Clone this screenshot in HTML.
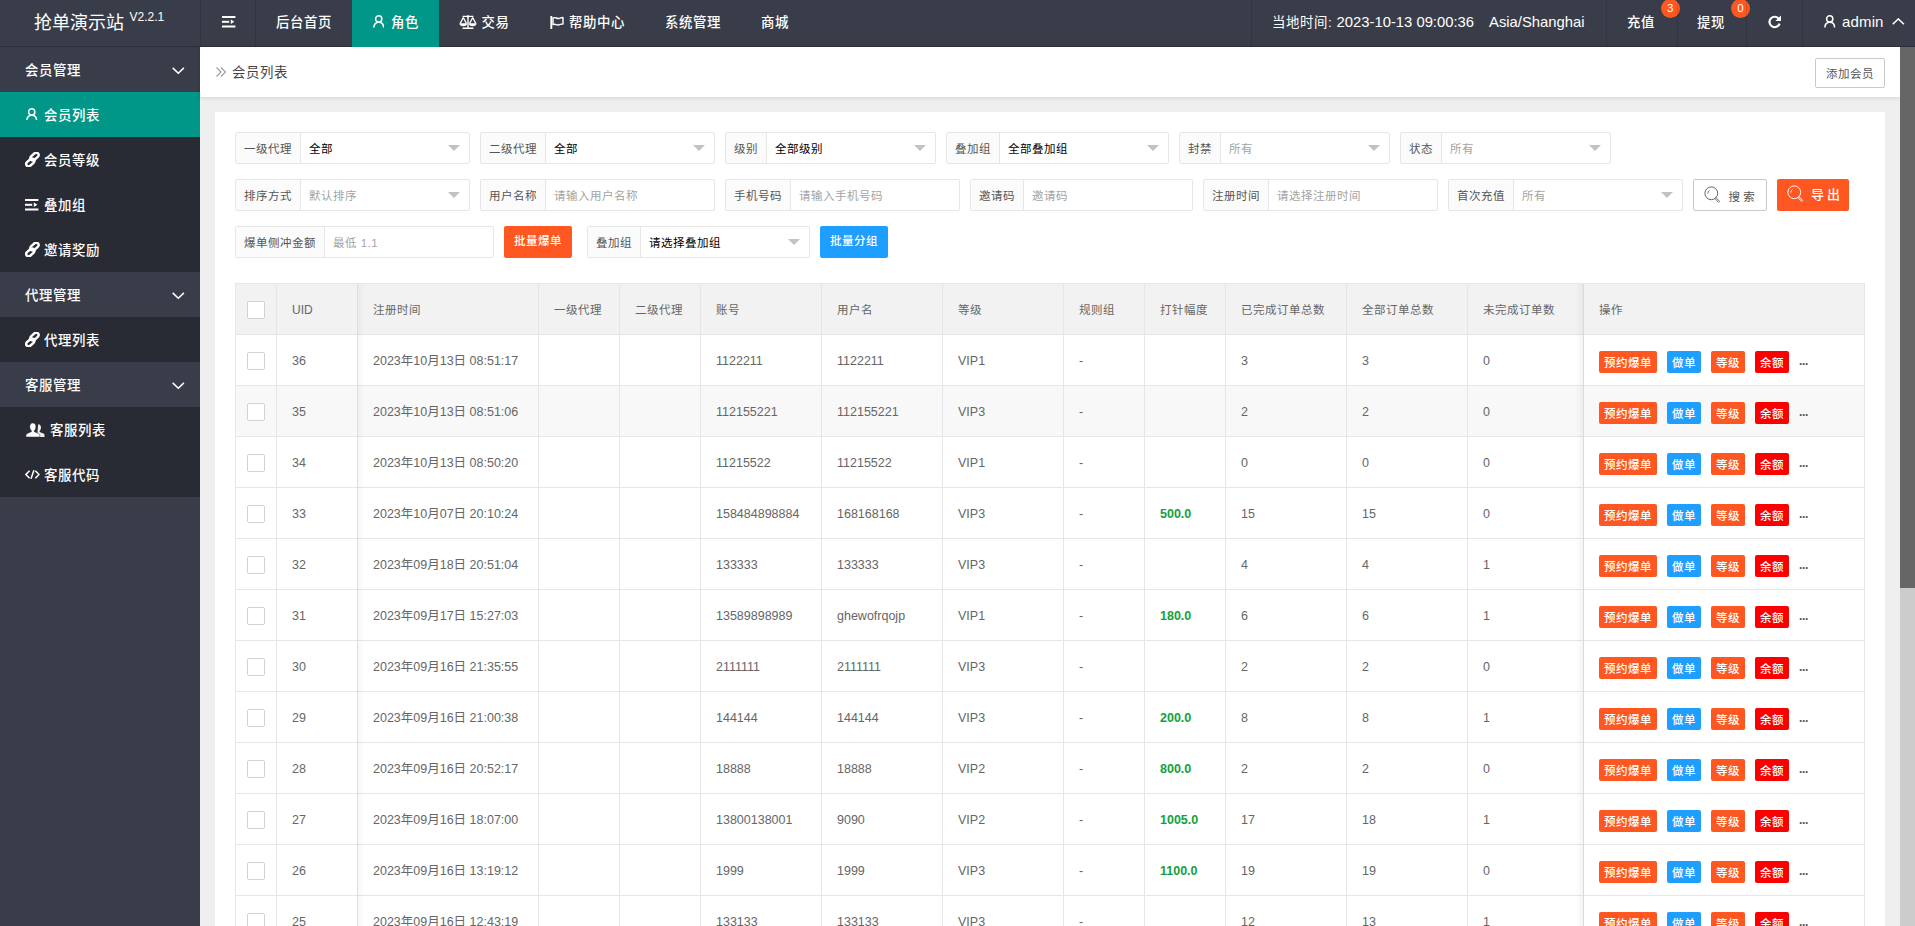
<!DOCTYPE html>
<html lang="zh-CN">
<head>
<meta charset="utf-8">
<title>会员列表</title>
<style>
*{box-sizing:border-box;margin:0;padding:0}
html,body{width:1915px;height:926px;overflow:hidden}
body{font-family:"Liberation Sans","Noto Sans CJK SC",sans-serif;font-size:14px;color:#333;background:#efefef;position:relative}
svg{display:block}
/* header */
#hd{position:absolute;left:0;top:0;width:1915px;height:47px;background:#393d49;color:#fff}
#logo{position:absolute;left:0;top:0;width:200px;height:47px;line-height:46px;font-size:18px;white-space:nowrap;padding-left:34px;letter-spacing:0}
#logo sup{font-size:12px;position:relative;top:-8px;left:5.5px;vertical-align:baseline}
.nv{position:absolute;top:0;height:47px;line-height:45px;font-size:14px;white-space:nowrap;color:#fff;border-left:1px solid rgba(0,0,0,.12);font-weight:500}
.nv.on{background:#009688;z-index:2}
#hl{position:absolute;left:0;top:46px;width:1915px;height:1px;background:rgba(0,0,0,.22);z-index:1}
#sl{position:absolute;left:199px;top:0;width:1px;height:926px;background:rgba(0,0,0,.14);z-index:1}
.nv .t{position:absolute;top:0}
.nv svg{position:absolute}
.badge{position:absolute;top:-1.1px;width:19px;height:19px;border-radius:9.5px;background:#ff5722;color:#fff;font-size:11.5px;line-height:19px;text-align:center;font-weight:400}
/* side */
#sd{position:absolute;left:0;top:47px;width:200px;height:879px;background:#393d49;color:#fff}
.si{position:absolute;left:0;width:200px;height:45px;line-height:48px;font-size:14px;white-space:nowrap;font-weight:500}
.si.p{background:#393d49}
.si.c{background:#282b33}
.si.on{background:#009688}
.si .t{position:absolute;top:0}
.si svg{position:absolute}
/* body */
#bar{position:absolute;left:200px;top:47px;width:1700px;height:50px;background:#fff;box-shadow:0 1px 4px rgba(0,0,0,.12)}
#bar .t{position:absolute;left:32px;top:0;line-height:51px;font-size:14px;color:#444}
#add{position:absolute;left:1615px;top:11px;width:70px;height:30px;border:1px solid #c9c9c9;border-radius:2px;font-size:12px;line-height:30px;text-align:center;color:#555;background:#fff}
#card{position:absolute;left:215px;top:112px;width:1670px;height:820px;background:#fff}
#sb{position:absolute;left:1900px;top:47px;width:15px;height:879px;background:#ccc}
#sb i{position:absolute;left:0;top:0;width:15px;height:541px;background:#666}
/* filter */
.f{position:absolute;height:32px;border:1px solid #e6e6e6;border-radius:2px;background:#fff;font-size:12px;white-space:nowrap}
.f .l{position:absolute;left:0;top:0;height:30px;line-height:32px;background:#fbfbfb;border-right:1px solid #e6e6e6;color:#555;text-align:center}
.f .v{position:absolute;top:0;height:30px;line-height:32px;color:#000}
.f .v.ph{color:#a3a3a3}
.f .ar{position:absolute;right:9px;top:12px;width:0;height:0;border:6px solid transparent;border-top-color:#c2c2c2;border-bottom-width:0}
.btn{position:absolute;height:32px;line-height:30px;border-radius:2px;color:#fff;font-size:12px;text-align:center;white-space:nowrap}
/* table */
#tb{position:absolute;left:235px;top:283px;width:1630px;height:660px;border:1px solid #e6e6e6;border-bottom:0;overflow:hidden;font-size:12.5px;color:#666}
.tr.h .td{font-size:12px}
.tr{position:absolute;left:0;width:1630px;height:51px;border-bottom:1px solid #e6e6e6;background:#fff}
.tr.h{background:#f2f2f2}
.tr.hv{background:#f8f8f8}
.td{position:absolute;top:0;height:50px;line-height:52px;border-right:1px solid #e6e6e6;padding-left:15px;white-space:nowrap;overflow:hidden}
.ck{position:absolute;left:11px;top:17px;width:18px;height:18px;border:1px solid #d2d2d2;border-radius:2px;background:#fff}
.g{color:#12a13a;font-weight:700}
.shl{position:absolute;top:0;width:8px;height:700px;background:linear-gradient(to right,rgba(0,0,0,.035),rgba(0,0,0,0))}
.shr{position:absolute;top:0;width:8px;height:700px;background:linear-gradient(to left,rgba(0,0,0,.05),rgba(0,0,0,0))}
#bar svg{position:absolute}
.btn svg{position:absolute}
.ob{position:absolute;top:16px;height:22px;line-height:24px;font-weight:500;border-radius:2px;color:#fff;font-size:12px;text-align:center}
.nv .t,.si .t,#bar .t{font-size:13.4px;letter-spacing:.6px}
.f .l,.f .v,.tr.h .td,.ob,.btn,#add{font-size:11.5px;letter-spacing:.5px}
.lat{font-size:12px !important;letter-spacing:0 !important}
</style>
</head>
<body>
<div id="hd"><div id="logo">抢单演示站<sup>V2.2.1</sup></div><div id="hl"></div>
<div class="nv" style="left:200px;width:55px"><svg style="left:21px;top:16px" width="14" height="12" viewBox="0 0 14 12" ><rect x="0" y="0" width="13.4" height="2" fill="#fff"/><rect x="0" y="4.8" width="7.2" height="2" fill="#fff"/><path d="M8.8 3.6 L12.4 5.8 L8.8 8 Z" fill="#fff"/><rect x="0" y="9.5" width="13.4" height="2" fill="#fff"/></svg></div>
<div class="nv" style="left:255px;width:97px"><span class="t" style="left:20px">后台首页</span></div>
<div class="nv on" style="left:352px;width:87px;border-left:0"><svg style="left:21px;top:15.4px" width="11.4" height="12.4" viewBox="0 0 12 13" preserveAspectRatio="none"><circle cx="6" cy="4.1" r="3.3" fill="none" stroke="#fff" stroke-width="1.6"/><path d="M0.9 13 C0.9 9.6 3 7.6 6 7.6 S11.1 9.6 11.1 13" fill="none" stroke="#fff" stroke-width="1.6"/></svg><span class="t" style="left:39px">角色</span></div>
<div class="nv" style="left:439px;width:91px;border-left:0"><svg style="left:19.5px;top:15.4px" width="18" height="14" viewBox="0 0 18 14" ><g fill="none" stroke="#fff" stroke-width="1.2"><path d="M3.6 1.4 H14.4 M9 1 V13 M3.6 13.2 H14.4" stroke-width="1.4"/><path d="M4.3 2.6 L1.2 8.4 M4.3 2.6 L7.4 8.4 M13.7 2.6 L10.6 8.4 M13.7 2.6 L16.8 8.4"/></g><path d="M0.4 8.3 H8.2 C8.2 10.2 6.6 11.2 4.3 11.2 S0.4 10.2 0.4 8.3Z M9.8 8.3 H17.6 C17.6 10.2 16 11.2 13.7 11.2 S9.8 10.2 9.8 8.3Z" fill="#fff"/><circle cx="9" cy="1.4" r="1.2" fill="#fff"/></svg><span class="t" style="left:42.5px">交易</span></div>
<div class="nv" style="left:530px;width:115px;border-left:0"><svg style="left:19.8px;top:15.8px" width="14" height="13" viewBox="0 0 14 13" ><path d="M1.3 0.3 V12.4" stroke="#fff" stroke-width="1.9" fill="none" stroke-linecap="round"/><path d="M3 1.9 C5.2 0.7 6.8 3.1 9.2 2.4 C10.8 1.9 12 1.4 13 1.6 V8 C11.6 7.6 10.4 8.6 8.8 9 C6.6 9.5 5.2 7.4 3 8.6 Z" fill="none" stroke="#fff" stroke-width="1.4" stroke-linejoin="round"/></svg><span class="t" style="left:39px">帮助中心</span></div>
<div class="nv" style="left:645px;width:96px;border-left:0"><span class="t" style="left:20px">系统管理</span></div>
<div class="nv" style="left:741px;width:68px;border-left:0"><span class="t" style="left:20px">商城</span></div>
<div class="nv" style="left:1251px;width:355px"><span class="t" style="left:20px;top:-.5px;font-weight:400">当地时间: <span style="font-size:14.8px;letter-spacing:0">2023-10-13 09:00:36</span><span style="font-size:14.8px;letter-spacing:0;margin-left:15px">Asia/Shanghai</span></span></div>
<div class="nv" style="left:1606px;width:71px"><span class="t" style="left:20px">充值</span><span class="badge" style="left:53.7px">3</span></div>
<div class="nv" style="left:1677px;width:70px"><span class="t" style="left:19px">提现</span><span class="badge" style="left:52.9px">0</span></div>
<div class="nv" style="left:1746px;width:56px"><svg style="left:21px;top:15px" width="14" height="14" viewBox="0 0 14 14" ><path d="M10.9 3.9 A5.2 5.2 0 1 0 11.6 8.6" fill="none" stroke="#fff" stroke-width="2.2"/><path d="M13 0.4 V6 H7.4 Z" fill="#fff"/></svg></div>
<div class="nv" style="left:1802px;width:113px"><svg style="left:21.3px;top:15.4px" width="11.4" height="12.4" viewBox="0 0 12 13" preserveAspectRatio="none"><circle cx="6" cy="4.1" r="3.3" fill="none" stroke="#fff" stroke-width="1.6"/><path d="M0.9 13 C0.9 9.6 3 7.6 6 7.6 S11.1 9.6 11.1 13" fill="none" stroke="#fff" stroke-width="1.6"/></svg><span class="t" style="left:39px;top:-1px;font-size:15px;font-weight:400;letter-spacing:.15px">admin</span><svg style="left:88.6px;top:17.9px" width="13" height="8" viewBox="0 0 13 8" ><path d="M0.7 6.3 L6.3 0.9 L11.9 6.3" fill="none" stroke="#fff" stroke-width="1.5"/></svg></div></div>
<div id="sd"><div class="si p" style="top:0px"><span class="t" style="left:25px">会员管理</span><svg style="left:172px;top:19.6px" width="13" height="8" viewBox="0 0 13 8" ><path d="M0.7 0.9 L6.3 6.3 L11.9 0.9" fill="none" stroke="#fff" stroke-width="1.5"/></svg></div>
<div class="si c on" style="top:45px"><svg style="left:26.3px;top:15.6px" width="11.4" height="12.4" viewBox="0 0 12 13" preserveAspectRatio="none"><circle cx="6" cy="4.1" r="3.3" fill="none" stroke="#fff" stroke-width="1.6"/><path d="M0.9 13 C0.9 9.6 3 7.6 6 7.6 S11.1 9.6 11.1 13" fill="none" stroke="#fff" stroke-width="1.6"/></svg><span class="t" style="left:44px">会员列表</span></div>
<div class="si c" style="top:90px"><svg style="left:24.8px;top:15.3px" width="15" height="15" viewBox="0 0 15 15" ><g transform="translate(7.4,7.5) rotate(-42)" fill="none" stroke="#fff" stroke-width="2.4"><rect x="-8.2" y="-1.6" width="9.2" height="4.8" rx="2.4"/><rect x="-1.0" y="-3.2" width="9.2" height="4.8" rx="2.4"/></g></svg><span class="t" style="left:44px">会员等级</span></div>
<div class="si c" style="top:135px"><svg style="left:25.4px;top:17px" width="14" height="12" viewBox="0 0 14 12" ><rect x="0" y="0" width="13.4" height="2" fill="#fff"/><rect x="0" y="4.8" width="7.2" height="2" fill="#fff"/><path d="M8.8 3.6 L12.4 5.8 L8.8 8 Z" fill="#fff"/><rect x="0" y="9.5" width="13.4" height="2" fill="#fff"/></svg><span class="t" style="left:44px">叠加组</span></div>
<div class="si c" style="top:180px"><svg style="left:24.8px;top:15.3px" width="15" height="15" viewBox="0 0 15 15" ><g transform="translate(7.4,7.5) rotate(-42)" fill="none" stroke="#fff" stroke-width="2.4"><rect x="-8.2" y="-1.6" width="9.2" height="4.8" rx="2.4"/><rect x="-1.0" y="-3.2" width="9.2" height="4.8" rx="2.4"/></g></svg><span class="t" style="left:44px">邀请奖励</span></div>
<div class="si p" style="top:225px"><span class="t" style="left:25px">代理管理</span><svg style="left:172px;top:19.6px" width="13" height="8" viewBox="0 0 13 8" ><path d="M0.7 0.9 L6.3 6.3 L11.9 0.9" fill="none" stroke="#fff" stroke-width="1.5"/></svg></div>
<div class="si c" style="top:270px"><svg style="left:24.8px;top:15.3px" width="15" height="15" viewBox="0 0 15 15" ><g transform="translate(7.4,7.5) rotate(-42)" fill="none" stroke="#fff" stroke-width="2.4"><rect x="-8.2" y="-1.6" width="9.2" height="4.8" rx="2.4"/><rect x="-1.0" y="-3.2" width="9.2" height="4.8" rx="2.4"/></g></svg><span class="t" style="left:44px">代理列表</span></div>
<div class="si p" style="top:315px"><span class="t" style="left:25px">客服管理</span><svg style="left:172px;top:19.6px" width="13" height="8" viewBox="0 0 13 8" ><path d="M0.7 0.9 L6.3 6.3 L11.9 0.9" fill="none" stroke="#fff" stroke-width="1.5"/></svg></div>
<div class="si c" style="top:360px"><svg style="left:25.6px;top:15.8px" width="19" height="14" viewBox="0 0 19 14" ><path d="M12.2 1.2 C14 1.2 15 2.6 15 4.6 C15 6.2 14.4 7.4 13.6 8 V9 L17.4 10.6 C18.2 11 18.5 11.6 18.5 12.4 V14 H11 Z" fill="#fff" opacity=".92"/><path d="M6.8 0 C8.8 0 9.9 1.5 9.9 3.8 C9.9 5.6 9.2 6.9 8.3 7.6 V8.7 L12.6 10.5 C13.4 10.9 13.8 11.5 13.8 12.4 V14 H0 V12.4 C0 11.5 0.4 10.9 1.2 10.5 L5.4 8.7 V7.6 C4.5 6.9 3.8 5.6 3.8 3.8 C3.8 1.5 4.9 0 6.8 0 Z" fill="#fff" stroke="#282b33" stroke-width=".5"/></svg><span class="t" style="left:50px">客服列表</span></div>
<div class="si c" style="top:405px"><svg style="left:24.5px;top:18.2px" width="15" height="9" viewBox="0 0 15 9" ><path d="M4.6 0.8 L0.9 4.5 L4.6 8.2 M10.3 0.8 L14 4.5 L10.3 8.2 M8.9 0.2 L6 8.8" fill="none" stroke="#fff" stroke-width="1.5"/></svg><span class="t" style="left:44px">客服代码</span></div></div>
<div id="bar"><svg style="left:16px;top:20.3px" width="10" height="10" viewBox="0 0 10 10" ><path d="M0.5 0.5 L5 5 L0.5 9.5 M5 0.5 L9.5 5 L5 9.5" fill="none" stroke="#999" stroke-width="1.1"/></svg><span class="t">会员列表</span><div id="add">添加会员</div></div>
<div id="card"><div class="f" style="left:20px;top:20px;width:235px"><span class="l" style="width:65px">一级代理</span><span class="v" style="left:73px">全部</span><i class="ar"></i></div>
<div class="f" style="left:265px;top:20px;width:235px"><span class="l" style="width:65px">二级代理</span><span class="v" style="left:73px">全部</span><i class="ar"></i></div>
<div class="f" style="left:510px;top:20px;width:211px"><span class="l" style="width:41px">级别</span><span class="v" style="left:49px">全部级别</span><i class="ar"></i></div>
<div class="f" style="left:731px;top:20px;width:223px"><span class="l" style="width:53px">叠加组</span><span class="v" style="left:61px">全部叠加组</span><i class="ar"></i></div>
<div class="f" style="left:964px;top:20px;width:211px"><span class="l" style="width:41px">封禁</span><span class="v ph" style="left:49px">所有</span><i class="ar"></i></div>
<div class="f" style="left:1185px;top:20px;width:211px"><span class="l" style="width:41px">状态</span><span class="v ph" style="left:49px">所有</span><i class="ar"></i></div>
<div class="f" style="left:20px;top:67px;width:235px"><span class="l" style="width:65px">排序方式</span><span class="v ph" style="left:73px">默认排序</span><i class="ar"></i></div>
<div class="f" style="left:265px;top:67px;width:235px"><span class="l" style="width:65px">用户名称</span><span class="v ph" style="left:73px">请输入用户名称</span></div>
<div class="f" style="left:510px;top:67px;width:235px"><span class="l" style="width:65px">手机号码</span><span class="v ph" style="left:73px">请输入手机号码</span></div>
<div class="f" style="left:755px;top:67px;width:223px"><span class="l" style="width:53px">邀请码</span><span class="v ph" style="left:61px">邀请码</span></div>
<div class="f" style="left:988px;top:67px;width:235px"><span class="l" style="width:65px">注册时间</span><span class="v ph" style="left:73px">请选择注册时间</span></div>
<div class="f" style="left:1233px;top:67px;width:235px"><span class="l" style="width:65px">首次充值</span><span class="v ph" style="left:73px">所有</span><i class="ar"></i></div>
<div class="btn" style="left:1478px;top:67px;width:74px;border:1px solid #c9c9c9;background:#fff;color:#555"><svg style="left:10.4px;top:6.3px" width="17" height="17" viewBox="0 0 17 17" ><circle cx="7.3" cy="7.3" r="6.4" fill="none" stroke="#666" stroke-width="1"/><path d="M3.9 7.6 A3.3 3.3 0 0 1 5.6 4.4" fill="none" stroke="#666" stroke-width=".9"/><path d="M12 11.6 L15.6 15.4 L14.6 16.4 L11 12.6 Z" fill="none" stroke="#666" stroke-width=".9"/></svg><span style="position:absolute;left:34.5px;top:1.5px;letter-spacing:0">搜 索</span></div>
<div class="btn" style="left:1562px;top:67px;width:72px;background:#ff5722;font-weight:500"><svg style="left:10.4px;top:5.7px" width="17" height="17" viewBox="0 0 17 17" ><circle cx="7.3" cy="7.3" r="6.4" fill="none" stroke="#fff" stroke-width="1"/><path d="M3.9 7.6 A3.3 3.3 0 0 1 5.6 4.4" fill="none" stroke="#fff" stroke-width=".9"/><path d="M12 11.6 L15.6 15.4 L14.6 16.4 L11 12.6 Z" fill="none" stroke="#fff" stroke-width=".9"/></svg><span style="position:absolute;left:34px;top:0.5px;font-size:13px;letter-spacing:3px">导出</span></div>
<div class="f" style="left:20px;top:114px;width:259px"><span class="l" style="width:89px">爆单侧冲金额</span><span class="v ph" style="left:97px">最低 1.1</span></div>
<div class="btn" style="left:289px;top:114px;width:68px;background:#ff5722;font-weight:500">批量爆单</div>
<div class="f" style="left:372px;top:114px;width:223px"><span class="l" style="width:53px">叠加组</span><span class="v" style="left:61px">请选择叠加组</span><i class="ar"></i></div>
<div class="btn" style="left:605px;top:114px;width:68px;background:#1e9fff;font-weight:500">批量分组</div></div>
<div id="tb"><div class="tr h" style="top:0"><div class="td" style="left:0px;width:41px;padding:0"><i class="ck"></i></div><div class="td" style="left:41px;width:81px;font-size:12px;letter-spacing:0">UID</div><div class="td" style="left:122px;width:181px">注册时间</div><div class="td" style="left:303px;width:81px">一级代理</div><div class="td" style="left:384px;width:81px">二级代理</div><div class="td" style="left:465px;width:121px">账号</div><div class="td" style="left:586px;width:121px">用户名</div><div class="td" style="left:707px;width:121px">等级</div><div class="td" style="left:828px;width:81px">规则组</div><div class="td" style="left:909px;width:81px">打针幅度</div><div class="td" style="left:990px;width:121px">已完成订单总数</div><div class="td" style="left:1111px;width:121px">全部订单总数</div><div class="td" style="left:1232px;width:116px">未完成订单数</div><div class="td" style="left:1348px;width:282px">操作</div></div>
<div class="tr" style="top:51px"><div class="td" style="left:0px;width:41px;padding:0"><i class="ck"></i></div><div class="td" style="left:41px;width:81px">36</div><div class="td" style="left:122px;width:181px">2023年10月13日 08:51:17</div><div class="td" style="left:303px;width:81px"></div><div class="td" style="left:384px;width:81px"></div><div class="td" style="left:465px;width:121px">1122211</div><div class="td" style="left:586px;width:121px">1122211</div><div class="td" style="left:707px;width:121px">VIP1</div><div class="td" style="left:828px;width:81px">-</div><div class="td" style="left:909px;width:81px"></div><div class="td" style="left:990px;width:121px">3</div><div class="td" style="left:1111px;width:121px">3</div><div class="td" style="left:1232px;width:116px">0</div><div class="td" style="left:1348px;width:282px;padding:0"><span class="ob" style="left:15px;width:58px;background:#ff5722">预约爆单</span><span class="ob" style="left:83px;width:34px;background:#1e9fff">做单</span><span class="ob" style="left:127px;width:34px;background:#ff5722">等级</span><span class="ob" style="left:171px;width:34px;background:#fc0000">余额</span><span style="position:absolute;left:215px;top:0;color:#555;font-size:12px;font-weight:700;letter-spacing:-.3px">...</span></div></div>
<div class="tr hv" style="top:102px"><div class="td" style="left:0px;width:41px;padding:0"><i class="ck"></i></div><div class="td" style="left:41px;width:81px">35</div><div class="td" style="left:122px;width:181px">2023年10月13日 08:51:06</div><div class="td" style="left:303px;width:81px"></div><div class="td" style="left:384px;width:81px"></div><div class="td" style="left:465px;width:121px">112155221</div><div class="td" style="left:586px;width:121px">112155221</div><div class="td" style="left:707px;width:121px">VIP3</div><div class="td" style="left:828px;width:81px">-</div><div class="td" style="left:909px;width:81px"></div><div class="td" style="left:990px;width:121px">2</div><div class="td" style="left:1111px;width:121px">2</div><div class="td" style="left:1232px;width:116px">0</div><div class="td" style="left:1348px;width:282px;padding:0"><span class="ob" style="left:15px;width:58px;background:#ff5722">预约爆单</span><span class="ob" style="left:83px;width:34px;background:#1e9fff">做单</span><span class="ob" style="left:127px;width:34px;background:#ff5722">等级</span><span class="ob" style="left:171px;width:34px;background:#fc0000">余额</span><span style="position:absolute;left:215px;top:0;color:#555;font-size:12px;font-weight:700;letter-spacing:-.3px">...</span></div></div>
<div class="tr" style="top:153px"><div class="td" style="left:0px;width:41px;padding:0"><i class="ck"></i></div><div class="td" style="left:41px;width:81px">34</div><div class="td" style="left:122px;width:181px">2023年10月13日 08:50:20</div><div class="td" style="left:303px;width:81px"></div><div class="td" style="left:384px;width:81px"></div><div class="td" style="left:465px;width:121px">11215522</div><div class="td" style="left:586px;width:121px">11215522</div><div class="td" style="left:707px;width:121px">VIP1</div><div class="td" style="left:828px;width:81px">-</div><div class="td" style="left:909px;width:81px"></div><div class="td" style="left:990px;width:121px">0</div><div class="td" style="left:1111px;width:121px">0</div><div class="td" style="left:1232px;width:116px">0</div><div class="td" style="left:1348px;width:282px;padding:0"><span class="ob" style="left:15px;width:58px;background:#ff5722">预约爆单</span><span class="ob" style="left:83px;width:34px;background:#1e9fff">做单</span><span class="ob" style="left:127px;width:34px;background:#ff5722">等级</span><span class="ob" style="left:171px;width:34px;background:#fc0000">余额</span><span style="position:absolute;left:215px;top:0;color:#555;font-size:12px;font-weight:700;letter-spacing:-.3px">...</span></div></div>
<div class="tr" style="top:204px"><div class="td" style="left:0px;width:41px;padding:0"><i class="ck"></i></div><div class="td" style="left:41px;width:81px">33</div><div class="td" style="left:122px;width:181px">2023年10月07日 20:10:24</div><div class="td" style="left:303px;width:81px"></div><div class="td" style="left:384px;width:81px"></div><div class="td" style="left:465px;width:121px">158484898884</div><div class="td" style="left:586px;width:121px">168168168</div><div class="td" style="left:707px;width:121px">VIP3</div><div class="td" style="left:828px;width:81px">-</div><div class="td" style="left:909px;width:81px"><b class="g">500.0</b></div><div class="td" style="left:990px;width:121px">15</div><div class="td" style="left:1111px;width:121px">15</div><div class="td" style="left:1232px;width:116px">0</div><div class="td" style="left:1348px;width:282px;padding:0"><span class="ob" style="left:15px;width:58px;background:#ff5722">预约爆单</span><span class="ob" style="left:83px;width:34px;background:#1e9fff">做单</span><span class="ob" style="left:127px;width:34px;background:#ff5722">等级</span><span class="ob" style="left:171px;width:34px;background:#fc0000">余额</span><span style="position:absolute;left:215px;top:0;color:#555;font-size:12px;font-weight:700;letter-spacing:-.3px">...</span></div></div>
<div class="tr" style="top:255px"><div class="td" style="left:0px;width:41px;padding:0"><i class="ck"></i></div><div class="td" style="left:41px;width:81px">32</div><div class="td" style="left:122px;width:181px">2023年09月18日 20:51:04</div><div class="td" style="left:303px;width:81px"></div><div class="td" style="left:384px;width:81px"></div><div class="td" style="left:465px;width:121px">133333</div><div class="td" style="left:586px;width:121px">133333</div><div class="td" style="left:707px;width:121px">VIP3</div><div class="td" style="left:828px;width:81px">-</div><div class="td" style="left:909px;width:81px"></div><div class="td" style="left:990px;width:121px">4</div><div class="td" style="left:1111px;width:121px">4</div><div class="td" style="left:1232px;width:116px">1</div><div class="td" style="left:1348px;width:282px;padding:0"><span class="ob" style="left:15px;width:58px;background:#ff5722">预约爆单</span><span class="ob" style="left:83px;width:34px;background:#1e9fff">做单</span><span class="ob" style="left:127px;width:34px;background:#ff5722">等级</span><span class="ob" style="left:171px;width:34px;background:#fc0000">余额</span><span style="position:absolute;left:215px;top:0;color:#555;font-size:12px;font-weight:700;letter-spacing:-.3px">...</span></div></div>
<div class="tr" style="top:306px"><div class="td" style="left:0px;width:41px;padding:0"><i class="ck"></i></div><div class="td" style="left:41px;width:81px">31</div><div class="td" style="left:122px;width:181px">2023年09月17日 15:27:03</div><div class="td" style="left:303px;width:81px"></div><div class="td" style="left:384px;width:81px"></div><div class="td" style="left:465px;width:121px">13589898989</div><div class="td" style="left:586px;width:121px">ghewofrqojp</div><div class="td" style="left:707px;width:121px">VIP1</div><div class="td" style="left:828px;width:81px">-</div><div class="td" style="left:909px;width:81px"><b class="g">180.0</b></div><div class="td" style="left:990px;width:121px">6</div><div class="td" style="left:1111px;width:121px">6</div><div class="td" style="left:1232px;width:116px">1</div><div class="td" style="left:1348px;width:282px;padding:0"><span class="ob" style="left:15px;width:58px;background:#ff5722">预约爆单</span><span class="ob" style="left:83px;width:34px;background:#1e9fff">做单</span><span class="ob" style="left:127px;width:34px;background:#ff5722">等级</span><span class="ob" style="left:171px;width:34px;background:#fc0000">余额</span><span style="position:absolute;left:215px;top:0;color:#555;font-size:12px;font-weight:700;letter-spacing:-.3px">...</span></div></div>
<div class="tr" style="top:357px"><div class="td" style="left:0px;width:41px;padding:0"><i class="ck"></i></div><div class="td" style="left:41px;width:81px">30</div><div class="td" style="left:122px;width:181px">2023年09月16日 21:35:55</div><div class="td" style="left:303px;width:81px"></div><div class="td" style="left:384px;width:81px"></div><div class="td" style="left:465px;width:121px">2111111</div><div class="td" style="left:586px;width:121px">2111111</div><div class="td" style="left:707px;width:121px">VIP3</div><div class="td" style="left:828px;width:81px">-</div><div class="td" style="left:909px;width:81px"></div><div class="td" style="left:990px;width:121px">2</div><div class="td" style="left:1111px;width:121px">2</div><div class="td" style="left:1232px;width:116px">0</div><div class="td" style="left:1348px;width:282px;padding:0"><span class="ob" style="left:15px;width:58px;background:#ff5722">预约爆单</span><span class="ob" style="left:83px;width:34px;background:#1e9fff">做单</span><span class="ob" style="left:127px;width:34px;background:#ff5722">等级</span><span class="ob" style="left:171px;width:34px;background:#fc0000">余额</span><span style="position:absolute;left:215px;top:0;color:#555;font-size:12px;font-weight:700;letter-spacing:-.3px">...</span></div></div>
<div class="tr" style="top:408px"><div class="td" style="left:0px;width:41px;padding:0"><i class="ck"></i></div><div class="td" style="left:41px;width:81px">29</div><div class="td" style="left:122px;width:181px">2023年09月16日 21:00:38</div><div class="td" style="left:303px;width:81px"></div><div class="td" style="left:384px;width:81px"></div><div class="td" style="left:465px;width:121px">144144</div><div class="td" style="left:586px;width:121px">144144</div><div class="td" style="left:707px;width:121px">VIP3</div><div class="td" style="left:828px;width:81px">-</div><div class="td" style="left:909px;width:81px"><b class="g">200.0</b></div><div class="td" style="left:990px;width:121px">8</div><div class="td" style="left:1111px;width:121px">8</div><div class="td" style="left:1232px;width:116px">1</div><div class="td" style="left:1348px;width:282px;padding:0"><span class="ob" style="left:15px;width:58px;background:#ff5722">预约爆单</span><span class="ob" style="left:83px;width:34px;background:#1e9fff">做单</span><span class="ob" style="left:127px;width:34px;background:#ff5722">等级</span><span class="ob" style="left:171px;width:34px;background:#fc0000">余额</span><span style="position:absolute;left:215px;top:0;color:#555;font-size:12px;font-weight:700;letter-spacing:-.3px">...</span></div></div>
<div class="tr" style="top:459px"><div class="td" style="left:0px;width:41px;padding:0"><i class="ck"></i></div><div class="td" style="left:41px;width:81px">28</div><div class="td" style="left:122px;width:181px">2023年09月16日 20:52:17</div><div class="td" style="left:303px;width:81px"></div><div class="td" style="left:384px;width:81px"></div><div class="td" style="left:465px;width:121px">18888</div><div class="td" style="left:586px;width:121px">18888</div><div class="td" style="left:707px;width:121px">VIP2</div><div class="td" style="left:828px;width:81px">-</div><div class="td" style="left:909px;width:81px"><b class="g">800.0</b></div><div class="td" style="left:990px;width:121px">2</div><div class="td" style="left:1111px;width:121px">2</div><div class="td" style="left:1232px;width:116px">0</div><div class="td" style="left:1348px;width:282px;padding:0"><span class="ob" style="left:15px;width:58px;background:#ff5722">预约爆单</span><span class="ob" style="left:83px;width:34px;background:#1e9fff">做单</span><span class="ob" style="left:127px;width:34px;background:#ff5722">等级</span><span class="ob" style="left:171px;width:34px;background:#fc0000">余额</span><span style="position:absolute;left:215px;top:0;color:#555;font-size:12px;font-weight:700;letter-spacing:-.3px">...</span></div></div>
<div class="tr" style="top:510px"><div class="td" style="left:0px;width:41px;padding:0"><i class="ck"></i></div><div class="td" style="left:41px;width:81px">27</div><div class="td" style="left:122px;width:181px">2023年09月16日 18:07:00</div><div class="td" style="left:303px;width:81px"></div><div class="td" style="left:384px;width:81px"></div><div class="td" style="left:465px;width:121px">13800138001</div><div class="td" style="left:586px;width:121px">9090</div><div class="td" style="left:707px;width:121px">VIP2</div><div class="td" style="left:828px;width:81px">-</div><div class="td" style="left:909px;width:81px"><b class="g">1005.0</b></div><div class="td" style="left:990px;width:121px">17</div><div class="td" style="left:1111px;width:121px">18</div><div class="td" style="left:1232px;width:116px">1</div><div class="td" style="left:1348px;width:282px;padding:0"><span class="ob" style="left:15px;width:58px;background:#ff5722">预约爆单</span><span class="ob" style="left:83px;width:34px;background:#1e9fff">做单</span><span class="ob" style="left:127px;width:34px;background:#ff5722">等级</span><span class="ob" style="left:171px;width:34px;background:#fc0000">余额</span><span style="position:absolute;left:215px;top:0;color:#555;font-size:12px;font-weight:700;letter-spacing:-.3px">...</span></div></div>
<div class="tr" style="top:561px"><div class="td" style="left:0px;width:41px;padding:0"><i class="ck"></i></div><div class="td" style="left:41px;width:81px">26</div><div class="td" style="left:122px;width:181px">2023年09月16日 13:19:12</div><div class="td" style="left:303px;width:81px"></div><div class="td" style="left:384px;width:81px"></div><div class="td" style="left:465px;width:121px">1999</div><div class="td" style="left:586px;width:121px">1999</div><div class="td" style="left:707px;width:121px">VIP3</div><div class="td" style="left:828px;width:81px">-</div><div class="td" style="left:909px;width:81px"><b class="g">1100.0</b></div><div class="td" style="left:990px;width:121px">19</div><div class="td" style="left:1111px;width:121px">19</div><div class="td" style="left:1232px;width:116px">0</div><div class="td" style="left:1348px;width:282px;padding:0"><span class="ob" style="left:15px;width:58px;background:#ff5722">预约爆单</span><span class="ob" style="left:83px;width:34px;background:#1e9fff">做单</span><span class="ob" style="left:127px;width:34px;background:#ff5722">等级</span><span class="ob" style="left:171px;width:34px;background:#fc0000">余额</span><span style="position:absolute;left:215px;top:0;color:#555;font-size:12px;font-weight:700;letter-spacing:-.3px">...</span></div></div>
<div class="tr" style="top:612px"><div class="td" style="left:0px;width:41px;padding:0"><i class="ck"></i></div><div class="td" style="left:41px;width:81px">25</div><div class="td" style="left:122px;width:181px">2023年09月16日 12:43:19</div><div class="td" style="left:303px;width:81px"></div><div class="td" style="left:384px;width:81px"></div><div class="td" style="left:465px;width:121px">133133</div><div class="td" style="left:586px;width:121px">133133</div><div class="td" style="left:707px;width:121px">VIP3</div><div class="td" style="left:828px;width:81px">-</div><div class="td" style="left:909px;width:81px"></div><div class="td" style="left:990px;width:121px">12</div><div class="td" style="left:1111px;width:121px">13</div><div class="td" style="left:1232px;width:116px">1</div><div class="td" style="left:1348px;width:282px;padding:0"><span class="ob" style="left:15px;width:58px;background:#ff5722">预约爆单</span><span class="ob" style="left:83px;width:34px;background:#1e9fff">做单</span><span class="ob" style="left:127px;width:34px;background:#ff5722">等级</span><span class="ob" style="left:171px;width:34px;background:#fc0000">余额</span><span style="position:absolute;left:215px;top:0;color:#555;font-size:12px;font-weight:700;letter-spacing:-.3px">...</span></div></div>
<div class="shl" style="left:121px"></div>
<div class="shr" style="left:1340px"></div></div>
<div id="sb"><i></i></div>
</body>
</html>
